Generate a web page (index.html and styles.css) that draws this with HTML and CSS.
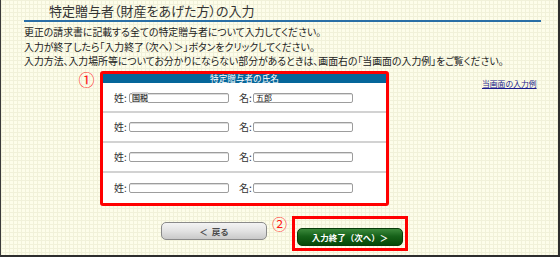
FILE: index.html
```html
<!DOCTYPE html>
<html lang="ja">
<head>
<meta charset="utf-8">
<title>特定贈与者（財産をあげた方）の入力</title>
<link rel="stylesheet" href="styles.css">
</head>
<body>
<div class="frame">
  <div class="title-wrap">
    <h1 class="title">特定贈与者（財産をあげた方）の入力</h1>
  </div>
  <div class="intro">
    <p>更正の請求書に記載する全ての特定贈与者について入力してください。</p>
    <p>入力が終了したら「入力終了（次へ）＞」ボタンをクリックしてください。</p>
    <p>入力方法、入力場所等についてお分かりにならない部分があるときは、画面右の「当画面の入力例」をご覧ください。</p>
  </div>
  <div class="main">
    <span class="num">①</span>
    <div class="box">
      <div class="box-head">特定贈与者の氏名</div>
      <div class="row first">
        <span class="lbl">姓:</span><div class="field"><span class="hl">国税</span></div>
        <span class="lbl l2">名:</span><div class="field">五郎</div>
      </div>
      <div class="row">
        <span class="lbl">姓:</span><div class="field"></div>
        <span class="lbl l2">名:</span><div class="field"></div>
      </div>
      <div class="row">
        <span class="lbl">姓:</span><div class="field"></div>
        <span class="lbl l2">名:</span><div class="field"></div>
      </div>
      <div class="row last">
        <span class="lbl">姓:</span><div class="field"></div>
        <span class="lbl l2">名:</span><div class="field"></div>
      </div>
    </div>
    <a class="example" href="#">当画面の入力例</a>
  </div>
  <div class="actions">
    <button class="btn back">＜&nbsp;&nbsp;戻る</button>
    <span class="num num2">②</span>
    <div class="hilite">
      <button class="btn next">入力終了（次へ）＞</button>
    </div>
  </div>
</div>
</body>
</html>
```
FILE: styles.css
```css
* { box-sizing: border-box; }
html, body { margin: 0; padding: 0; }
body {
  font-family: "Noto Sans CJK JP", "Noto Sans", sans-serif;
  color: #222;
}
.frame {
  width: 560px;
  height: 257px;
  overflow: hidden;
  border-left: 1px solid #3a3a3a;
  border-right: 2px solid #2e2e2e;
  border-bottom: 2px solid #2e2e2e;
  background-color: #fdfdea;
  background-image:
    linear-gradient(#f1f1d9 1px, transparent 1px),
    linear-gradient(90deg, #f1f1d9 1px, transparent 1px);
  background-size: 4px 4px;
}
.title-wrap {
  margin: 0 17px 0 23px;
  padding: 2px 0 1px 25px;
  border-bottom: 2px solid #2a6fa6;
}
.title {
  margin: 0;
  font-size: 13px;
  line-height: 17px;
  font-weight: normal;
  color: #333;
  font-feature-settings: "palt";
}
.intro {
  margin: 3px 0 0 23px;
}
.intro p {
  margin: 0;
  font-size: 9.9px;
  line-height: 14.5px;
  color: #222;
  font-feature-settings: "palt";
  white-space: nowrap;
}
.main {
  display: flex;
  align-items: flex-start;
  margin-top: 2px;
  padding-left: 77px;
}
.num {
  color: #ff1a1a;
  font-size: 16px;
  line-height: 16px;
  width: 17px;
  text-align: center;
}
.box {
  margin-left: 5px;
  width: 289px;
  border: 3px solid #ff0000;
  border-radius: 3px;
  background: #fff;
}
.box-head {
  height: 9px;
  background: #05669a;
  color: #fff;
  font-size: 8.6px;
  line-height: 9px;
  text-align: center;
}
.row {
  display: flex;
  align-items: center;
  height: 30px;
  padding-left: 11px;
  padding-top: 1px;
  border-bottom: 2px solid #d2d2d2;
}
.row.first { height: 30px; padding-top: 3px; }
.row.last { border-bottom: none; }
.lbl {
  font-size: 10px;
  line-height: 10px;
  width: 15px;
  color: #333;
}
.lbl.l2 { margin-left: 10px; width: 14px; }
.field {
  width: 100px;
  height: 10px;
  border: 1px solid #9d9d9d;
  border-radius: 2px;
  box-shadow: inset 0 1px 0 #dcdcdc;
  background: #fff;
  font-size: 8px;
  line-height: 8px;
  padding: 0 2px;
  color: #111;
}
.hl { background: #d4d4d4; }
.example {
  margin: 8px 0 0 93px;
  font-size: 7.8px;
  line-height: 9px;
  color: #1b1b8c;
  text-decoration: underline;
  white-space: nowrap;
}
.actions {
  display: flex;
  align-items: flex-start;
  margin-top: 10px;
  padding-left: 160px;
}
.btn {
  font-family: "Noto Sans CJK JP", "Noto Sans", sans-serif;
  width: 106px;
  height: 18px;
  margin: 0;
  padding: 0;
  font-weight: bold;
  font-size: 8.5px;
  line-height: 16px;
  border-radius: 5px;
  cursor: pointer;
}
.back {
  margin-top: 6px;
  border: 1px solid #8a8a8a;
  background: linear-gradient(#f4f4f4, #e2e2e2 50%, #c9c9c9);
  color: #4a4a4a;
}
.num2 {
  margin-left: 5px;
  margin-top: 0;
  font-size: 15px;
  line-height: 15px;
  width: 15px;
}
.hilite {
  margin-left: 5px;
  border: 3px solid #ff0000;
  padding: 3px 2px 2px 2px;
  width: 116px;
}
.next {
  border: 1px solid #0b3d0b;
  background: linear-gradient(#3c8a3c, #16621a 45%, #064806);
  color: #fff;
  border-radius: 5px;
}
```
